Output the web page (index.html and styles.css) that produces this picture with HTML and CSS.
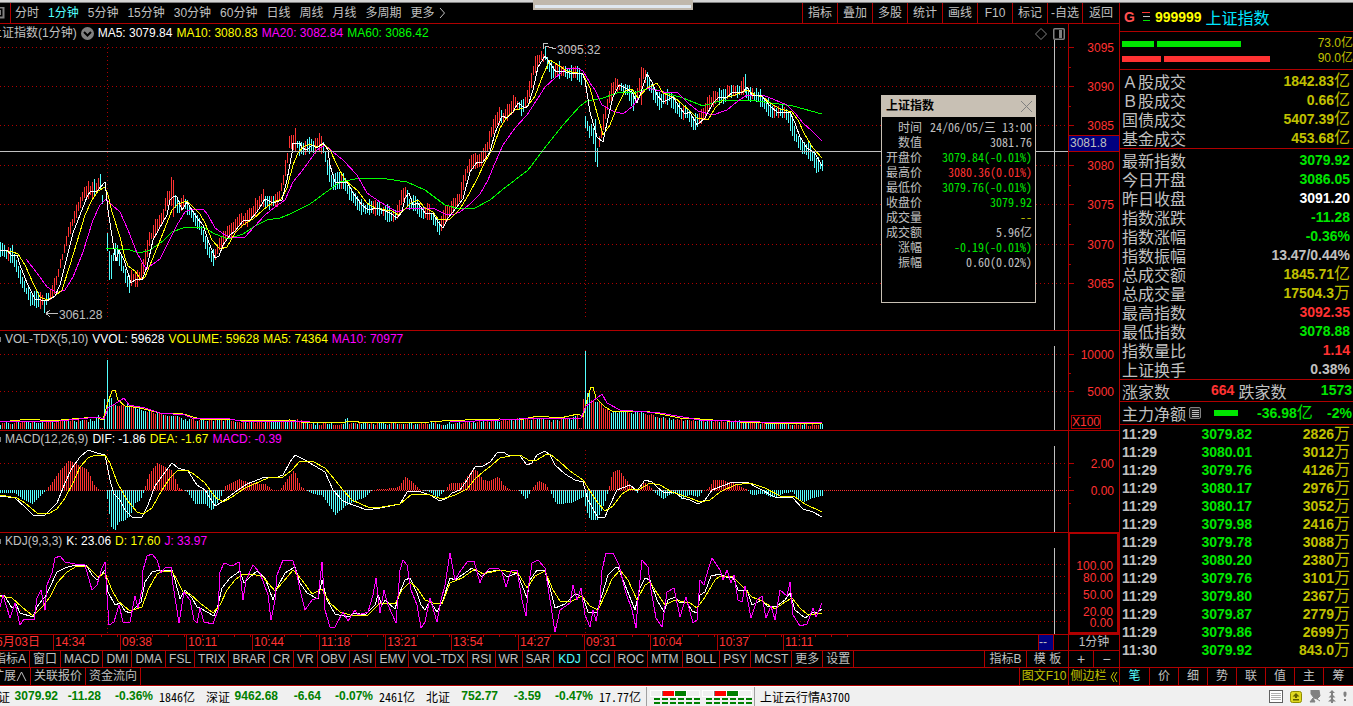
FILE: index.html
```html
<!DOCTYPE html>
<html lang="zh-CN">
<head>
<meta charset="utf-8">
<title>上证指数</title>
<link rel="stylesheet" href="styles.css">
</head>
<body>
<div class="app">
  <div class="strip"><div class="strip-tab"></div></div>

  <main class="workspace">
    <section class="left">
      <nav class="toolbar">
        <div class="periods">
          <svg class="period-icon" width="5" height="12"><path d="M0 .5H3.5V10.500H0M0 3V8" fill="none" stroke="#808080" stroke-width="2"/></svg>
          <button>分时</button><button class="active">1分钟</button><button>5分钟</button><button>15分钟</button><button>30分钟</button><button>60分钟</button><button>日线</button><button>周线</button><button>月线</button><button>多周期</button>
          <button class="more">更多<svg width="7" height="10"><path d="M1 0L5.500 5L1 10" fill="none" stroke="#c0c0c0"/></svg></button>
        </div>
        <div class="tools">
          <button>指标</button><button>叠加</button><button>多股</button><button>统计</button><button>画线</button><button>F10</button><button>标记</button><button>-自选</button><button>返回</button>
        </div>
      </nav>

      <div class="panel">
        <svg class="plot" id="price" height="306"></svg>
        <svg class="axis" id="price-axis" height="306"></svg>
        <div class="legend clipped">
          <span>上证指数(1分钟)</span>
          <svg width="13" height="13"><circle cx="6.500" cy="6.500" r="6.500" fill="#808080"/><path d="M3 5L6.500 8.500L10 5" fill="none" stroke="#000" stroke-width="2"/></svg>
          <span class="white">MA5: 3079.84</span><span class="yellow">MA10: 3080.83</span><span class="magenta">MA20: 3082.84</span><span class="lime">MA60: 3086.42</span>
        </div>
        <div class="panel-icons">
          <svg width="12" height="12"><path d="M6 .5L11.500 6L6 11.500L.5 6Z" fill="none" stroke="#808080"/></svg>
          <svg width="12" height="12"><rect x=".75" y=".75" width="10.500" height="10.500" rx="1" fill="none" stroke="#808080" stroke-width="1.500"/><rect x="6" y="2" width="3" height="8" fill="#808080"/></svg>
        </div>
        <output class="price-tag">3081.8</output>
        <aside class="info">
          <header><b>上证指数</b><button aria-label="关闭"><svg width="11" height="11"><path d="M0 0L11 11M11 0L0 11" stroke="#808080"/></svg></button></header>
          <dl>
            <dt>时间</dt><dd>24/06/05/三 13:00</dd>
            <dt>数值</dt><dd>3081.76</dd>
            <dt>开盘价</dt><dd class="green">3079.84(-0.01%)</dd>
            <dt>最高价</dt><dd class="red">3080.36(0.01%)</dd>
            <dt>最低价</dt><dd class="green">3079.76(-0.01%)</dd>
            <dt>收盘价</dt><dd class="green">3079.92</dd>
            <dt>成交量</dt><dd class="gold">--</dd>
            <dt>成交额</dt><dd>5.96亿</dd>
            <dt>涨幅</dt><dd class="green">-0.19(-0.01%)</dd>
            <dt>振幅</dt><dd>0.60(0.02%)</dd>
          </dl>
        </aside>
      </div>

      <div class="panel ruled">
        <svg class="plot" id="volume" height="99"></svg>
        <svg class="axis" id="volume-axis" height="99"></svg>
        <div class="legend"><i class="dot"></i><span>VOL-TDX(5,10)</span><span class="white">VVOL: 59628</span><span class="yellow">VOLUME: 59628</span><span class="yellow">MA5: 74364</span><span class="magenta">MA10: 70977</span></div>
        <span class="unit">X100</span>
      </div>

      <div class="panel ruled">
        <svg class="plot" id="macd" height="101"></svg>
        <svg class="axis" id="macd-axis" height="101"></svg>
        <div class="legend"><i class="dot"></i><span>MACD(12,26,9)</span><span class="white">DIF: -1.86</span><span class="yellow">DEA: -1.67</span><span class="magenta">MACD: -0.39</span></div>
      </div>

      <div class="panel ruled">
        <svg class="plot" id="kdj" height="101"></svg>
        <svg class="axis selected" id="kdj-axis" height="101"></svg>
        <div class="legend"><i class="dot"></i><span>KDJ(9,3,3)</span><span class="white">K: 23.06</span><span class="yellow">D: 17.60</span><span class="magenta">J: 33.97</span></div>
      </div>

      <div class="times">
        <div class="time-scale"><span class="date">6月03日</span><span>14:34</span><span>09:38</span><span>10:11</span><span>10:44</span><span>11:18</span><span>13:21</span><span>13:54</span><span>14:27</span><span>09:31</span><span>10:04</span><span>10:37</span><span>11:11</span></div>
        <span class="cursor">--</span>
        <span class="period">1分钟</span>
      </div>

      <div class="tabs">
        <button class="cut">指标A</button><button>窗口</button><button>MACD</button><button>DMI</button><button>DMA</button><button>FSL</button><button>TRIX</button><button>BRAR</button><button>CR</button><button>VR</button><button>OBV</button><button>ASI</button><button>EMV</button><button>VOL-TDX</button><button>RSI</button><button>WR</button><button>SAR</button><button class="active">KDJ</button><button>CCI</button><button>ROC</button><button>MTM</button><button>BOLL</button><button>PSY</button><button>MCST</button><button>更多</button><button>设置</button>
        <div class="tabs-end"><button class="wide">指标B</button><button class="wide">模 板</button><button class="half">+</button><button class="half">−</button></div>
      </div>
      <div class="tabs second">
        <button class="cut">扩展<svg width="11" height="11"><path d="M1 10L5.500 1L10 10" fill="none" stroke="#c0c0c0"/></svg></button><button>关联报价</button><button>资金流向</button>
        <div class="tabs-end gold"><button class="f10">图文F10</button><button class="side">侧边栏<svg width="8" height="10"><path d="M4 0L1 5L4 10M7 0L4 5L7 10" fill="none" stroke="#c0c000"/></svg></button></div>
      </div>
    </section>

    <section class="quote">
      <h1><b class="flag">G</b><svg width="8" height="10"><path d="M0 .5H8" stroke="#ff3232"/><path d="M1 4.500H8" stroke="#c0c0c0"/><path d="M1 8.500H8" stroke="#00e600"/></svg><b class="yellow">999999</b><span class="name">上证指数</span></h1>
      <div class="flows ruled">
        <div class="flow"><i class="bar up" style="width:32px"></i><i class="bar up" style="width:84px"></i><span>73.0亿</span></div>
        <div class="flow"><i class="bar down" style="width:39px"></i><i class="bar down" style="width:106px"></i><span>90.0亿</span></div>
      </div>
      <table class="stats ruled">
        <tr><th>Ａ股成交</th><td class="gold">1842.83<i>亿</i></td></tr>
        <tr><th>Ｂ股成交</th><td class="gold">0.66<i>亿</i></td></tr>
        <tr><th>国债成交</th><td class="gold">5407.39<i>亿</i></td></tr>
        <tr><th>基金成交</th><td class="gold">453.68<i>亿</i></td></tr>
      </table>
      <table class="stats ruled">
        <tr><th>最新指数</th><td class="green">3079.92</td></tr>
        <tr><th>今日开盘</th><td class="green">3086.05</td></tr>
        <tr><th>昨日收盘</th><td class="white">3091.20</td></tr>
        <tr><th>指数涨跌</th><td class="green">-11.28</td></tr>
        <tr><th>指数涨幅</th><td class="green">-0.36%</td></tr>
        <tr><th>指数振幅</th><td>13.47/0.44%</td></tr>
        <tr><th>总成交额</th><td class="gold">1845.71<i>亿</i></td></tr>
        <tr><th>总成交量</th><td class="gold">17504.3<i>万</i></td></tr>
        <tr><th>最高指数</th><td class="red">3092.35</td></tr>
        <tr><th>最低指数</th><td class="green">3078.88</td></tr>
        <tr><th>指数量比</th><td class="red">1.14</td></tr>
        <tr><th>上证换手</th><td>0.38%</td></tr>
      </table>
      <div class="pair ruled"><span>涨家数</span><b class="red rise">664</b><span>跌家数</span><b class="green last">1573</b></div>
      <div class="pair ruled"><span>主力净额</span><svg class="note" width="13" height="13"><rect x=".5" y=".5" width="11" height="11" rx="1.500" fill="#202020" stroke="#808080"/><path d="M2.500 3.500H9.500M2.500 5.500H9.500M2.500 7.500H9.500M2.500 9.500H9.500" stroke="#c0c0c0" shape-rendering="crispEdges"/></svg><i class="bar up net"></i><b class="green net-value">-36.98<i>亿</i></b><b class="green last">-2%</b></div>
      <table class="deals ruled">
        <tr><td>11:29</td><td>3079.82</td><td>2826<i>万</i></td></tr>
        <tr><td>11:29</td><td>3080.01</td><td>3012<i>万</i></td></tr>
        <tr><td>11:29</td><td>3079.76</td><td>4126<i>万</i></td></tr>
        <tr><td>11:29</td><td>3080.17</td><td>2976<i>万</i></td></tr>
        <tr><td>11:29</td><td>3080.17</td><td>3052<i>万</i></td></tr>
        <tr><td>11:29</td><td>3079.98</td><td>2416<i>万</i></td></tr>
        <tr><td>11:29</td><td>3079.78</td><td>3088<i>万</i></td></tr>
        <tr><td>11:29</td><td>3080.20</td><td>2380<i>万</i></td></tr>
        <tr><td>11:29</td><td>3079.76</td><td>3101<i>万</i></td></tr>
        <tr><td>11:29</td><td>3079.80</td><td>2367<i>万</i></td></tr>
        <tr><td>11:29</td><td>3079.87</td><td>2779<i>万</i></td></tr>
        <tr><td>11:29</td><td>3079.86</td><td>2699<i>万</i></td></tr>
        <tr><td>11:30</td><td>3079.92</td><td>843.0<i>万</i></td></tr>
      </table>
      <div class="quote-tabs"><button class="active">笔</button><button>价</button><button>细</button><button>势</button><button>联</button><button>值</button><button>主</button><button>筹</button></div>
    </section>
  </main>

  <footer class="status">
    <div class="index first"><span>上证</span><b>3079.92</b><b>-11.28</b><b>-0.36%</b><span class="amount">1846亿</span></div>
    <div class="index"><span>深证</span><b>9462.68</b><b>-6.64</b><b>-0.07%</b><span class="amount">2461亿</span></div>
    <div class="index"><span>北证</span><b>752.77</b><b>-3.59</b><b>-0.47%</b><span class="amount">17.77亿</span></div>
    <div class="meters">
      <svg width="50" height="14" shape-rendering="crispEdges"><rect width="50" height="7" fill="#fff"/><path d="M1 1H11V6H1ZM37 1H49V6H37Z" fill="#f0f0f0"/><rect x="12" y="1" width="1" height="5" fill="#808080"/><rect x="13" y="1" width="11" height="5" fill="#f00"/><rect x="25" y="1" width="11" height="5" fill="#008000"/><path d="M4 9H50M4 12.500H50" stroke="#008000" stroke-width="2" stroke-dasharray="6 2"/></svg>
      <svg width="50" height="14" shape-rendering="crispEdges"><rect width="50" height="7" fill="#fff"/><path d="M1 1H11V6H1ZM37 1H49V6H37Z" fill="#f0f0f0"/><rect x="12" y="1" width="1" height="5" fill="#808080"/><rect x="13" y="1" width="11" height="5" fill="#f00"/><rect x="25" y="1" width="11" height="5" fill="#008000"/><path d="M4 9H50M4 12.500H50" stroke="#008000" stroke-width="2" stroke-dasharray="6 2"/></svg>
    </div>
    <span class="server">上证云行情A3700</span>
    <div class="tray">
      <svg width="14" height="13" shape-rendering="crispEdges"><rect x=".5" y=".5" width="13" height="12" fill="#fff" stroke="#606060"/><path d="M2 3.500H12M2 5.500H12M2 7.500H12M2 9.500H12" stroke="#b0b0b0"/></svg>
      <svg width="12" height="12"><rect x=".5" y=".5" width="11" height="11" rx="2" fill="#e0d820" stroke="#908c00"/><path d="M6 2L9.500 5.500H7V7H5V5.500H2.500ZM3 8H9V9.500H3Z" fill="#605c00"/></svg>
      <svg width="12" height="13"><path d="M2 0H10L11 6L8 9L5 8L2 4ZM4 8L6 12H1ZM8 9L11 11" fill="#808080" stroke="#808080"/></svg>
      <svg width="8" height="13"><path d="M4 0L7 3H5V5L7.500 7.500H5V9L8 11.500H5V13H3V11.500H0L3 9V7.500H.5L3 5V3H1Z" fill="#808080"/></svg>
      <svg width="4" height="11"><path d="M.5 1.500Q2-.5 3.500 1.500V4L2.500 6H1.500L.5 4ZM1 8H3V10H1Z" fill="#808080"/></svg>
    </div>
  </footer>
</div>
<script src="charts.js"></script>
</body>
</html>
```
FILE: styles.css
```css
* { box-sizing: border-box; }

:root {
  --rule: #b00000;
  --text: #c0c0c0;
  --cyan: #54ffff;
  --sans: "Liberation Sans", "Noto Sans CJK SC", sans-serif;
  --cjk: "Noto Sans CJK SC", sans-serif;
}

body {
  margin: 0;
  background: #000;
  color: var(--text);
  font: 12px/15px var(--sans);
}

button {
  display: flex;
  align-items: center;
  justify-content: center;
  margin: 0;
  padding: 0;
  border: 0;
  background: none;
  color: inherit;
  font: inherit;
  white-space: nowrap;
}

svg { flex: none; }
i { font-style: normal; }

.app { display: flex; flex-direction: column; min-height: 100vh; overflow: hidden; }
.ruled { border-top: 1px solid var(--rule); }

.white { color: #fff; }
.yellow { color: #ff0; }
.magenta { color: #f0f; }
.lime { color: #0f0; }
.green { color: #00e600; }
.red { color: #ff3232; }
.gold { color: #c0c000; }
.active { color: var(--cyan); }

.strip { position: relative; height: 3px; background: #d4d4d4; border-bottom: 1px solid #808080; }
.strip-tab {
  position: absolute;
  z-index: 1;
  left: 533px;
  top: 0;
  width: 160px;
  height: 10px;
  background: #e0e8f0;
  border: solid #c0b8ac;
  border-width: 5px 2px 2px;
}

.workspace { display: grid; grid-template-columns: minmax(0, 1fr) 234px; flex: 1; }
.left { display: flex; flex-direction: column; min-width: 0; }

.toolbar { display: flex; justify-content: space-between; height: 21px; border-bottom: 1px solid var(--rule); }
.periods { display: flex; align-items: center; gap: 9px; }
.period-icon { margin-right: -4px; }
.periods button:nth-of-type(1) { align-self: stretch; padding-left: 4px; border-left: 1px solid var(--rule); }
.more svg { margin-left: 4px; }
.tools { display: flex; }
.tools button { width: 35px; border-left: 1px solid var(--rule); }
.tools button:last-child { width: 37px; }

.panel { position: relative; display: grid; grid-template-columns: minmax(0, 1fr) 51px; }
.plot { width: 100%; display: block; shape-rendering: crispEdges; overflow: hidden; }
.axis { width: 100%; display: block; border-left: 1px solid var(--rule); }
.axis.selected { border: 2px solid var(--rule); border-top-width: 1px; }
.plot text, .axis text { font: 12px var(--sans); }
.legend { position: absolute; left: 0; top: 1px; display: flex; align-items: center; gap: 4px; white-space: nowrap; }
.legend.clipped { left: -10px; top: 2px; }
.dot { width: 1px; height: 5px; background: #808080; }
.panel-icons { position: absolute; right: 54px; top: 4px; display: flex; gap: 6px; }
.price-tag {
  position: absolute;
  right: 0;
  top: 111px;
  width: 50px;
  padding-left: 1px;
  border: solid var(--rule);
  border-width: 1px 0;
  background: #000080;
}
.unit { position: absolute; right: 18px; bottom: 1px; border: 1px solid var(--rule); color: #ff3232; line-height: 12px; }

.info {
  position: absolute;
  top: 71px;
  right: 83px;
  width: 155px;
  height: 208px;
  border: 1px solid #c8c0b4;
  background: #000;
}
.info header { display: flex; align-items: center; justify-content: space-between; height: 21px; padding: 0 3px 0 4px; background: #c8c0b4; color: #000; }
.info dl {
  display: grid;
  grid-template-columns: 36px 1fr;
  margin: 2px 3px 0 4px;
  font-family: var(--cjk);
  font-feature-settings: "hwid";
  text-align: right;
}
.info dd { margin: 0; white-space: nowrap; }

.times { display: grid; grid-template-columns: minmax(0, 1fr) 16px 14px 51px; height: 16px; border-top: 1px solid var(--rule); }
.time-scale { display: grid; grid-template-columns: 53px repeat(4, 67px 66px 66px); overflow: hidden; color: #ff3232; }
.time-scale span {
  padding-left: 1px;
  border-left: 1px solid var(--rule);
  background: repeating-linear-gradient(90deg, transparent 0 15px, var(--rule) 15px 16px) 0 0 / 100% 2px no-repeat;
}
.time-scale .date { margin-left: -4px; padding: 0; border: 0; background: none; white-space: nowrap; }
.cursor { background: #000080; border: solid var(--rule); border-width: 0 1px; }
.period { grid-column: 4; border-left: 1px solid var(--rule); text-align: center; }

.tabs { display: flex; height: 17px; border-top: 1px solid var(--rule); }
.tabs button { padding: 0 3px; border-right: 1px solid var(--rule); }
.tabs button.active { padding: 0 5px 0 4px; }
.tabs button.cut { margin-left: -9px; }
.tabs-end { display: flex; margin-left: auto; border-left: 1px solid var(--rule); }
.tabs-end .wide { width: 42px; }
.tabs-end .half { width: 25px; padding: 0; font-size: 14px; }
.tabs-end .half:last-child, .tabs-end .side { border-right: 0; }
.tabs.second { height: 19px; border-bottom: 1px solid var(--rule); }
.tabs.second button.cut { margin-left: -11px; }
.tabs-end .f10 { width: 49px; padding: 0; }
.tabs-end .side { width: 50px; padding: 0; gap: 3px; }

.quote { display: flex; flex-direction: column; border-left: 1px solid var(--rule); font-size: 14px; }
.quote h1 { display: flex; align-items: center; gap: 4px; height: 28px; margin: 0; padding-left: 4px; font-size: 14px; }
.quote h1 svg { margin: 0 1px 0 3px; }
.flag { color: #ff5050; }
.name { color: #00e6ff; font: 16px/16px var(--cjk); }
.flows { height: 38px; padding: 4px 0 3px 2px; color: #c0c000; font-size: 12px; }
.flow { display: flex; align-items: center; gap: 3px; }
.flow span { margin-left: auto; }
.bar { height: 6px; }
.bar.up { background: #00e600; }
.bar.down { background: #ff3232; }

.quote table { width: 100%; border-spacing: 0; border-collapse: separate; }
.quote th, .quote td { height: 19px; padding: 0; font-weight: bold; line-height: 18px; text-align: right; vertical-align: middle; }
.quote th { padding-left: 2px; font: 16px/18px var(--cjk); text-align: left; }
.quote td:last-child { padding-right: 3px; }
.quote td i, .quote b i { font: 16px/0 var(--cjk); }
.stats { padding: 1px 0; }

.pair { display: flex; align-items: center; height: 22px; padding: 0 1px 0 2px; }
.pair + .pair { height: 23px; }
.pair span { font: 16px/18px var(--cjk); }
.pair .last { margin-left: auto; }
.rise { margin: 0 4px 0 41px; }
.note { margin-left: 3px; }
.net { width: 24px; margin-left: 12px; }
.net-value { margin-left: 19px; }

.deals tr td { height: 18px; }
.deals td:first-child { padding-left: 2px; text-align: left; }
.deals td:nth-child(2) { width: 92px; color: #00e600; }
.deals td:nth-child(3) { width: 101px; color: #c0c000; }

.quote-tabs { display: grid; grid-template-columns: repeat(7, 29px) 1fr; margin-top: auto; height: 19px; border: solid var(--rule); border-width: 1px 0; font-size: 12px; }
.quote-tabs button + button { border-left: 1px solid var(--rule); }

.status { display: flex; align-items: center; height: 20px; border-top: 1px solid #fff; background: #f0f0f0; color: #000; font-family: var(--cjk); font-feature-settings: "hwid"; white-space: nowrap; }
.index { display: grid; grid-template-columns: 27px 45px 43px 52px 53px; }
.index b { color: #008000; font-family: var(--sans); text-align: right; }
.index.first { margin-left: -14px; }
.amount { padding-left: 6px; }
.meters { display: flex; gap: 2px; align-self: stretch; align-items: center; padding: 0 2px 0 3px; border: solid #a0a0a0; border-width: 0 1px; }
.server { padding-left: 5px; }
.tray { display: flex; align-items: center; gap: 7px; margin-left: auto; padding-right: 6px; }
```
FILE: charts.js
```javascript
const RED = '#ff3232', CYAN = '#54ffff', RULE = '#b00000', GREY = '#c0c0c0';
const SESSIONS = [107, 585];
const CURSOR_X = 14;
const LAST_X = 822;

const parse = s => s.trim().split(/\s+/).map(p => p.split(',').map(Number));

function at(points, x) {
  for (let i = 1; i < points.length; i++) {
    if (x <= points[i][0]) {
      const [x0, y0] = points[i - 1], [x1, y1] = points[i];
      return y0 + (y1 - y0) * (x - x0) / (x1 - x0);
    }
  }
  return points[points.length - 1][1];
}

const noise = n => { const v = Math.sin(n * 12.9898) * 43758.5453; return v - Math.floor(v); };

function el(parent, name, attrs, text) {
  const node = document.createElementNS('http://www.w3.org/2000/svg', name);
  for (const key in attrs) node.setAttribute(key, attrs[key]);
  if (text) node.textContent = text;
  parent.appendChild(node);
  return node;
}

const layer = (id, top) => el(document.getElementById(id), 'g', { transform: `translate(0,${-top})` });

function line(g, data, color) {
  el(g, 'polyline', { points: data.map(p => p.join()).join(' '), fill: 'none', stroke: color, 'stroke-width': 1 });
}

/* Bars sit on even columns before the first session mark and after x = 746. */
function bar(g, x, y0, y1, color) {
  const column = x < SESSIONS[0] || x > 746 ? x - 1 : x;
  el(g, 'rect', { x: column, y: Math.round(Math.min(y0, y1)), width: 1, height: Math.max(1, Math.round(Math.abs(y1 - y0))), fill: color });
}

function grid(g, levels, from, to) {
  for (const y of levels) el(g, 'line', { x1: 0, x2: '100%', y1: y + .5, y2: y + .5, stroke: RULE, 'stroke-dasharray': '1 3' });
  for (const x of SESSIONS) el(g, 'line', { x1: x + .5, x2: x + .5, y1: from, y2: to, stroke: RULE, 'stroke-dasharray': '1 3' });
}

function crosshair(g, from, to) {
  const wrap = el(g, 'svg', { x: '100%', y: from, width: 1, height: to - from, overflow: 'visible' });
  el(wrap, 'rect', { x: -CURSOR_X, y: 0, width: 1, height: to - from, fill: GREY });
}

function axis(id, top, labels, ticks) {
  const g = layer(id, top);
  for (const [y, text] of labels) {
    if (ticks) el(g, 'rect', { x: 0, y, width: 5, height: 1, fill: RULE });
    el(g, 'text', { x: ticks ? 45 : 43, y: y + 5, 'text-anchor': 'end', fill: RED }, text);
  }
  return g;
}

/* price */
{
  const ma5 = parse(`0,250 7,250 12,256 17,255 20,265 27,283 35,299 47,301 55,296 60,285 67,257 73,233 80,215 87,197 90,192 97,191 105,182 108,210 113,243 116,261 119,250 124,260 131,283 136,279 142,280 147,267 153,240 163,222 167,215 170,200 174,196 177,197 182,210 187,202 192,210 197,218 203,225 208,240 215,258 219,256 223,245 230,235 235,231 243,221 250,220 257,212 265,199 273,203 282,200 287,180 292,153 293,143 300,143 302,148 307,150 312,145 317,148 323,143 328,150 330,165 335,182 347,182 353,193 362,205 368,210 377,208 390,213 397,218 402,212 405,198 409,193 413,205 418,203 425,213 433,213 438,222 443,228 448,218 456,208 463,199 470,172 477,162 483,162 490,152 495,133 502,116 507,118 513,112 518,103 525,108 528,106 533,90 538,67 545,56 550,63 556,72 563,71 572,74 582,73 585,80 590,112 597,137 603,142 608,118 613,97 619,85 625,88 632,92 637,103 640,95 647,74 652,82 657,95 663,102 673,97 680,108 685,114 690,112 697,125 705,118 713,103 718,98 727,97 733,92 743,92 747,87 752,95 762,96 770,106 778,113 790,112 795,123 800,137 807,148 815,153 822,166`);
  const ma10 = parse(`0,250 13,252 18,254 25,265 33,283 40,297 47,300 55,296 62,290 70,265 77,242 85,215 92,200 98,191 105,187 108,195 112,212 120,237 125,258 128,266 135,271 141,280 145,277 150,265 157,248 165,228 172,210 178,204 187,201 193,207 200,214 205,223 212,240 220,249 227,247 235,233 243,225 253,219 263,210 272,203 281,199 287,188 293,165 298,153 303,147 310,144 317,147 324,144 330,150 338,167 345,180 352,186 358,191 367,203 375,208 392,211 398,215 405,209 411,203 418,200 425,208 433,212 438,219 450,219 460,209 470,192 477,179 485,162 493,148 500,128 507,117 515,110 527,107 535,96 543,75 550,60 558,65 567,71 583,74 590,88 597,113 603,135 610,125 617,107 625,91 632,89 638,98 647,88 657,83 663,93 675,98 682,104 690,111 697,118 708,120 715,108 725,98 735,95 747,90 755,95 763,97 770,103 780,109 792,112 798,120 805,135 813,148 822,158`);
  const ma20 = parse(`26,259 37,273 47,287 57,293 65,290 73,277 83,252 93,220 100,205 106,199 112,205 120,212 128,230 137,253 146,269 153,264 160,259 168,243 177,225 185,212 192,209 203,209 208,215 215,228 225,235 233,238 245,237 255,226 265,215 275,207 285,200 293,182 302,171 310,160 317,150 325,145 333,152 343,160 357,175 367,193 380,202 397,212 408,208 433,208 445,214 452,215 460,212 470,204 480,194 488,180 495,163 503,145 515,128 527,115 538,98 545,87 555,78 567,68 577,68 583,71 590,83 595,90 602,105 613,111 623,114 633,106 643,91 648,88 660,91 667,93 677,92 688,103 698,111 713,115 727,110 738,101 747,95 763,95 775,100 787,105 795,113 803,123 812,131 822,141`);
  const ma60 = parse(`106,248 130,250 140,253 150,250 163,241 172,232 183,228 203,227 215,234 228,239 243,234 255,226 267,220 280,218 290,214 310,204 325,193 340,182 355,179 380,178 407,182 425,190 445,205 460,209 475,208 490,200 502,190 515,180 528,170 547,145 563,125 580,106 587,101 603,98 617,93 637,92 650,88 663,92 683,98 703,106 723,100 757,101 793,106 822,114`);
  const extremes = { 45: [301, 313], 107: [233, 251], 109: [251, 280], 111: [255, 279], 129: [275, 293], 171: [177, 206], 173: [180, 217], 213: [249, 266], 295: [128, 152], 545: [46, 60], 585: [116, 128], 587: [121, 131], 589: [126, 138], 595: [119, 162], 597: [148, 167], 641: [67, 105], 745: [74, 93], 817: [158, 173] };

  const g = layer('price', 24);
  grid(g, [47, 86, 125, 165, 204, 244, 283], 44, 320);
  for (let x = 1; x <= LAST_X + 1; x += 2) {
    const mid = at(ma5, Math.min(x + 4, LAST_X));
    const slope = at(ma5, Math.min(x + 6, LAST_X)) - at(ma5, Math.max(x - 2, 0));
    const half = 3 + noise(x) * 5;
    const [hi, lo] = extremes[x] || [mid - half - noise(x + 1) * 3, mid + half];
    const rising = slope + (noise(x * 3) - .5) * 14 < 0;
    if (!extremes[x] && SESSIONS.some(s => x >= s - 3 && x <= s + 4)) continue;
    bar(g, x, hi, lo, rising ? RED : CYAN);
  }
  line(g, ma60, '#0f0');
  line(g, ma20, '#f0f');
  line(g, ma10, '#ff0');
  line(g, ma5, '#fff');
  el(g, 'path', { d: 'M543.500 49V43.500H548M545 46L549 47M549 47L556 49M46 313.500H58M46 313.500L50 310M46 313.500L50 317', fill: 'none', stroke: GREY });
  el(g, 'text', { x: 557, y: 54, fill: GREY }, '3095.32');
  el(g, 'text', { x: 59, y: 319, fill: GREY }, '3061.28');
  el(g, 'rect', { x: 0, y: 151, width: '100%', height: 1, fill: GREY });
  crosshair(g, 40, 330);

  const a = axis('price-axis', 24, [[47, '3095'], [86, '3090'], [125, '3085'], [165, '3080'], [204, '3075'], [244, '3070'], [283, '3065']], true);
  for (const y of [67, 106, 145, 185, 224, 264]) el(a, 'rect', { x: 0, y, width: 2, height: 1, fill: RULE });
}

/* volume */
{
  const tops = parse(`0,423 20,422 60,421 95,420 99,415 101,428 103,428 105,399 107,360 109,397 111,398 113,405 120,404 130,405 140,409 155,412 165,415 175,415 185,420 200,420 220,419 240,422 290,420 300,420 310,423 344,423 346,413 348,423 450,423 475,421 500,420 535,418 550,420 570,419 577,414 579,428 581,428 583,399 585,351 587,393 589,392 591,400 600,401 605,409 615,412 640,412 665,418 690,420 740,421 800,424 822,424`);
  const ma5 = parse(`0,422 30,419 50,421 95,417 103,420 108,402 112,391 115,390 118,400 125,406 140,408 160,413 180,413 200,419 225,419 245,421 290,420 300,422 340,423 352,421 365,423 430,422 442,421 465,420 500,419 520,420 537,416 560,418 578,414 583,417 587,400 591,387 593,387 596,398 605,407 612,411 650,412 680,418 700,419 740,422 790,424 800,423 822,424`);
  const ma10 = parse(`0,422 60,421 98,417 104,419 108,408 118,402 124,398 129,405 145,408 160,413 185,415 192,418 225,418 240,421 310,422 450,422 500,420 540,418 570,418 581,418 586,406 597,398 602,394 607,403 620,410 660,413 700,420 730,421 760,422 822,423`);
  const g = layer('volume', 331);
  grid(g, [354, 391], 350, 430);
  for (let x = 1; x <= LAST_X + 1; x += 2) {
    const top = at(tops, x);
    const jitter = top < 400 || top > 426 ? 0 : (noise(x) - .35) * 3;
    bar(g, x, Math.min(top + jitter, 428), 429, x === 107 || x === 585 || noise(x * 7) < .5 ? CYAN : RED);
  }
  line(g, ma5, '#ff0');
  line(g, ma10, '#f0f');
  crosshair(g, 346, 430);
  const a = axis('volume-axis', 331, [[354, '10000'], [391, '5000']], true);
  el(a, 'rect', { x: 0, y: 373, width: 2, height: 1, fill: RULE });
}

/* MACD */
{
  const dif = parse(`0,496 15,498 25,507 34,516 45,515 50,510 57,503 65,483 72,468 80,457 88,450 97,453 105,455 110,480 114,494 120,500 125,510 132,517 142,517 148,505 155,486 165,472 172,463 178,468 188,471 197,485 205,490 215,506 222,502 235,492 247,484 265,477 275,478 283,475 290,462 295,455 303,459 315,466 325,472 333,490 343,501 353,505 367,510 380,508 400,504 407,492 418,491 430,495 440,501 447,498 452,493 460,490 467,480 475,467 483,466 490,462 497,453 503,452 508,455 520,456 527,465 532,463 537,455 545,451 550,455 555,465 565,474 575,480 583,482 588,500 592,507 598,518 605,517 610,505 617,490 630,485 637,491 645,480 652,482 657,487 663,492 675,492 682,498 690,500 698,504 705,500 712,490 722,486 733,482 747,482 758,488 775,497 792,497 803,509 813,512 822,517`);
  const dea = parse(`0,495 17,498 25,503 37,513 48,514 57,509 65,498 73,483 80,467 88,458 95,455 105,455 110,463 117,482 127,500 137,512 143,514 152,508 162,490 170,478 177,471 187,470 195,475 205,483 215,497 223,502 232,497 245,488 268,478 283,477 292,470 300,461 312,461 325,468 335,480 343,490 352,500 370,508 382,507 400,504 412,494 430,495 442,499 455,495 467,489 475,479 483,472 492,465 500,458 510,456 520,455 530,461 537,460 545,455 550,454 560,462 570,471 583,480 590,491 598,503 605,511 613,506 622,494 630,489 640,489 650,483 660,485 672,492 690,498 700,502 710,500 720,492 735,485 750,483 765,488 780,496 795,497 805,504 822,512`);
  const hist = parse(`0,-3 15,-3 25,-10 33,-14 43,-4 47,0 50,4 60,19 70,30 78,26 88,20 95,5 100,0 106,0 108,-18 111,-37 115,-40 118,-32 123,-31 130,-26 135,-13 140,-10 144,0 148,15 157,27 167,22 172,20 178,3 182,1 187,-2 195,-14 205,-14 212,-21 220,-8 225,4 238,11 250,7 265,6 272,0 280,0 288,13 294,20 300,4 305,0 312,-4 322,-5 328,-14 335,-25 345,-16 355,-11 365,-7 372,0 380,1 395,2 400,5 405,13 412,8 420,0 430,-2 437,-8 445,0 450,7 462,7 468,15 473,22 477,19 483,10 490,9 498,14 503,5 510,0 518,0 526,-10 531,0 538,9 545,6 550,-2 556,-14 570,-13 583,-7 586,-20 590,-30 597,-30 604,-14 608,0 612,17 618,21 625,11 632,3 637,-3 643,9 650,3 655,-3 663,-9 670,-4 678,-4 680,-9 690,-5 698,-7 703,0 708,1 713,10 722,10 735,6 745,1 748,1 752,-5 765,-4 770,-7 778,-7 785,-3 793,-2 800,-10 805,-12 813,-8 822,-6`);
  const g = layer('macd', 431);
  grid(g, [463], 450, 531);
  el(g, 'line', { x1: 0, x2: '100%', y1: 490.5, y2: 490.5, stroke: RED, 'stroke-dasharray': '1 1' });
  for (let x = 1; x <= LAST_X + 1; x += 2) {
    const v = at(hist, x);
    if (Math.abs(v) >= .5) bar(g, x, 490, 490 - v, v > 0 ? RED : CYAN);
  }
  line(g, dif, '#fff');
  line(g, dea, '#ff0');
  crosshair(g, 446, 532);
  const a = axis('macd-axis', 431, [[463, '2.00'], [490, '0.00']], true);
  for (const y of [477, 503]) el(a, 'rect', { x: 0, y, width: 2, height: 1, fill: RULE });
}

/* KDJ */
{
  const k = parse(`0,596 4,595 12,608 16,604 20,613 33,617 37,607 42,600 45,597 50,587 57,572 65,568 75,565 87,566 92,575 97,580 105,570 108,592 115,605 120,603 125,611 130,613 135,608 141,602 145,582 152,572 160,570 172,570 175,580 180,599 185,590 192,598 197,607 200,608 214,616 218,605 222,588 230,578 240,571 244,583 250,577 257,571 265,578 273,600 277,588 285,573 295,567 300,583 307,593 318,599 322,580 327,600 335,614 348,617 355,613 365,615 375,605 378,595 382,605 385,600 395,609 400,592 405,580 410,578 417,593 421,605 425,610 430,601 437,612 443,600 450,578 455,580 462,575 472,568 477,572 482,577 487,572 500,570 507,577 517,573 522,585 527,598 530,580 537,570 545,571 550,588 555,608 565,604 575,594 583,597 588,612 597,612 602,595 608,575 615,568 618,567 625,585 635,610 640,588 645,578 650,580 657,600 664,612 668,600 675,597 680,603 687,602 692,611 697,613 700,595 705,592 711,576 720,574 728,578 733,577 738,590 747,590 752,605 758,602 762,600 768,607 777,606 785,600 790,593 795,610 805,618 812,613 818,612 822,609`);
  const d = parse(`0,596 12,598 22,607 33,616 42,607 50,597 57,583 67,572 77,566 87,566 92,571 98,577 105,573 112,590 118,601 130,611 142,607 148,590 157,574 163,571 172,571 178,582 183,592 190,594 200,603 213,613 220,605 227,590 235,580 243,574 253,574 263,577 275,591 283,582 293,570 302,580 312,594 322,589 330,603 340,612 350,615 368,615 380,603 395,604 402,590 410,582 417,588 425,600 433,603 442,604 450,583 462,578 475,569 483,574 500,570 518,573 527,588 535,576 545,571 553,590 560,601 570,602 582,596 590,606 598,610 605,595 612,579 620,570 628,580 637,600 645,585 650,582 657,593 665,605 675,600 690,603 697,608 705,597 715,580 720,576 733,577 742,586 752,597 762,601 775,609 785,602 792,598 800,608 808,615 822,613`);
  const j = parse(`0,607 3,595 10,618 15,603 20,625 24,619 34,620 37,598 41,590 45,610 47,585 52,573 55,558 60,556 65,562 75,564 85,565 92,590 97,585 102,568 105,562 107,595 109,625 114,622 119,605 123,622 130,622 135,596 138,608 142,590 143,570 147,556 152,554 157,560 161,573 165,568 171,567 173,585 179,623 184,592 190,600 194,620 197,623 200,608 204,622 213,624 218,610 220,572 224,563 232,566 239,562 243,600 246,580 253,565 260,573 268,595 271,620 275,600 277,575 283,560 293,561 297,575 300,590 305,610 312,600 318,598 322,562 325,610 330,627 335,627 343,612 348,621 355,610 358,615 368,612 373,595 376,578 380,613 384,590 388,605 396,623 400,570 403,560 407,565 411,590 417,605 421,628 425,622 430,598 437,622 441,600 445,585 450,553 455,580 461,570 468,561 474,561 480,583 483,575 490,568 498,568 502,572 506,587 511,571 517,570 522,600 526,616 528,590 532,563 538,560 545,568 550,600 555,632 560,610 570,603 573,585 577,600 581,588 585,615 590,627 593,610 596,621 600,600 602,570 606,553 613,553 619,565 625,590 632,610 636,628 638,600 642,560 648,567 651,590 656,618 662,627 667,592 674,588 680,617 686,597 693,623 697,620 700,580 704,585 708,570 712,558 720,570 723,580 727,570 731,583 734,575 738,600 742,602 745,586 751,618 757,600 762,596 766,618 771,606 775,620 780,590 787,596 790,582 793,615 800,626 807,624 813,608 816,617 822,603`);
  const g = layer('kdj', 533);
  grid(g, [564, 576, 593, 610, 621], 552, 634);
  line(g, k, '#fff');
  line(g, d, '#ff0');
  line(g, j, '#f0f');
  crosshair(g, 548, 634);
  axis('kdj-axis', 533, [[564, '100.00'], [576, '80.00'], [593, '50.00'], [610, '20.00'], [621, '0.00']], false);
}
```
